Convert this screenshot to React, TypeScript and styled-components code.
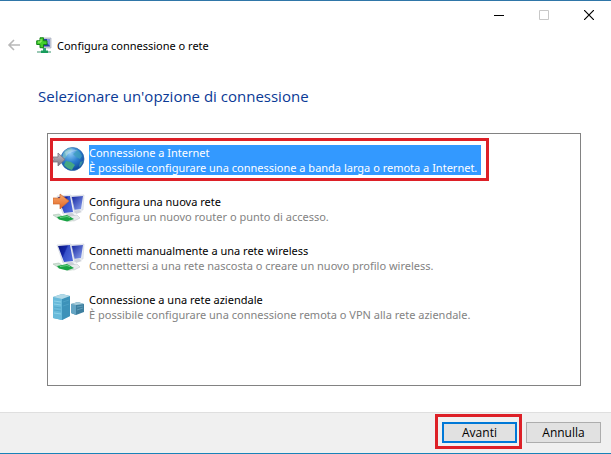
import React, { useState } from "react";
import styled, { createGlobalStyle, css } from "styled-components";

const GlobalStyle = createGlobalStyle`
  *, *::before, *::after { box-sizing: border-box; }
  body {
    margin: 0;
    background: #fff;
    color: #000;
    font: 11px/15px "Noto Sans", "Open Sans", sans-serif;
  }
  button { font: inherit; color: inherit; }
`;

const Window = styled.div`
  display: flex;
  flex-direction: column;
  min-height: 100vh;
  background: #fff;
  border-top: 1px solid #2f76a8;
  border-bottom: 1px solid #1883b8;
`;

const CaptionBar = styled.div`
  display: flex;
  justify-content: flex-end;
  height: 28px;
`;

const CaptionButton = styled.button`
  display: flex;
  align-items: center;
  justify-content: center;
  width: 45px;
  padding: 0;
  border: 0;
  background: none;
`;

const TitleRow = styled.header`
  display: flex;
  align-items: center;
  height: 32px;
  padding-left: 7px;
`;

const BackButton = styled.button`
  display: flex;
  padding: 0;
  margin-right: 15px;
  border: 0;
  background: none;
`;

const WindowTitle = styled.span`
  margin-left: 5px;
`;

const Content = styled.main`
  display: flex;
  flex: 1;
  flex-direction: column;
  padding: 24px 30px 26px 38px;
`;

const Heading = styled.h1`
  margin: 0 0 26px;
  color: #0a3a96;
  font-family: "Open Sans", "Noto Sans", sans-serif;
  font-size: 15px;
  font-weight: 400;
  line-height: 22px;
`;

const OptionList = styled.div`
  display: flex;
  flex: 1;
  flex-direction: column;
  align-items: flex-start;
  gap: 17px;
  margin-left: 9px;
  padding: 10px 5px;
  border: 1px solid #828282;
`;

const markFrame = css`
  content: "";
  position: absolute;
  border: 3px solid #dd2027;
  pointer-events: none;
`;

const Option = styled.button<{ $marked: boolean }>`
  position: relative;
  display: flex;
  align-items: center;
  gap: 4px;
  padding: 0;
  border: 0;
  background: none;
  text-align: left;
  white-space: nowrap;
  ${({ $marked }) => $marked && css`
    &::after { ${markFrame} inset: -6px -8px -5px -3px; }
  `}
`;

const OptionText = styled.span<{ $selected: boolean }>`
  display: flex;
  flex-direction: column;
  padding-right: 4px;
  color: ${({ $selected }) => ($selected ? "#fff" : "#000")};
  background: ${({ $selected }) => ($selected ? "#3399ff" : "transparent")};
`;

const OptionDetail = styled.span<{ $selected: boolean }>`
  color: ${({ $selected }) => ($selected ? "#fff" : "#838383")};
`;

const Footer = styled.footer`
  display: flex;
  justify-content: flex-end;
  gap: 9px;
  padding: 9px 10px 10px;
  border-top: 1px solid #dfdfdf;
  background: #f0f0f0;
`;

const ActionButton = styled.button<{ $primary?: boolean }>`
  position: relative;
  display: flex;
  align-items: center;
  justify-content: center;
  width: 75px;
  height: 21px;
  padding: 0;
  border: ${({ $primary }) => ($primary ? "2px solid #0078d7" : "1px solid #adadad")};
  background: #e1e1e1;
  font-family: "Open Sans", "Noto Sans", sans-serif;
  font-size: 12px;
  ${({ $primary }) => $primary && css`
    &::after { ${markFrame} inset: -10px -7px -8px -9px; }
  `}
`;

const BackIcon = () => (
  <svg width="14" height="14" viewBox="0 0 14 14" fill="none" stroke="#b8b8b8" strokeWidth="1.6" aria-hidden="true">
    <path d="M13 7H2M7 2L2 7l5 5" />
  </svg>
);

const SetupIcon = () => (
  <svg width="16" height="17" viewBox="0 0 16 17" aria-hidden="true">
    <path d="M6 1h9v10H6z" fill="#cfd4de" stroke="#a6adbd" strokeWidth=".7" />
    <path d="M7 2h7v7.5H7z" fill="#2b3fa8" />
    <path d="M11 2h3v7l-3-3z" fill="#8296dc" />
    <path d="M7 11h3v3H7z" fill="#35a578" />
    <path d="M1 14h14v2H1z" fill="#9bc9b5" />
    <path d="M5 13.5h7V16H5z" fill="#169c5b" />
    <path d="M4 .8h3.5v3H11v3.7H7.5v3.2H4V7.500H.7V3.800H4z" fill="#43d02c" stroke="#16821b" />
    <path d="M5 2v3H2" fill="none" stroke="#a5f277" />
  </svg>
);

const GlobeIcon = () => (
  <svg width="32" height="32" viewBox="0 0 32 32" aria-hidden="true">
    <defs>
      <radialGradient id="ocean" cx=".4" cy=".25" r=".8">
        <stop offset="0" stopColor="#8fcbf5" />
        <stop offset=".5" stopColor="#2c7fd0" />
        <stop offset="1" stopColor="#0b3f91" />
      </radialGradient>
      <linearGradient id="steel" x2="0" y2="1">
        <stop stopColor="#c5c2ca" />
        <stop offset="1" stopColor="#77737f" />
      </linearGradient>
    </defs>
    <circle cx="19.500" cy="15" r="11.500" fill="url(#ocean)" stroke="#2869ad" strokeWidth=".7" />
    <path d="M11 8q3-4 8-4l-1 3-3 1-1 4-3 3-2-1z" fill="#7abfc0" opacity=".7" />
    <path d="M13 17l5 1 4 3-2 3-1 2q-5-1-8-5z" fill="#46a783" />
    <path d="M22 5q5 2 7 7l-2 3-4-2-3-3 3-2z" fill="#3f9fbd" opacity=".8" />
    <path d="M27 18l3-1q-1 4-4 6z" fill="#388fa2" />
    <path d="M12 8q6-5 13-1-7 0-12 5z" fill="#fff" opacity=".3" />
    <path d="M0 13h5V9l7 6.500-7 6.500v-4H0l1-3z" fill="url(#steel)" stroke="#77717f" strokeWidth=".8" />
  </svg>
);

const NetworkIcon = ({ incoming = false }: { incoming?: boolean }) => {
  const id = incoming ? "screen-in" : "screen";
  return (
    <svg width="32" height="32" viewBox="0 0 32 32" aria-hidden="true">
      <defs>
        <linearGradient id={id} x2="1" y2=".5">
          <stop stopColor="#0a1680" />
          <stop offset=".5" stopColor="#1426a6" />
          <stop offset=".58" stopColor="#3650c8" />
          <stop offset="1" stopColor="#4a64d8" />
        </linearGradient>
        <linearGradient id={`${id}-back`} x2="1" y2="1">
          <stop stopColor="#0e1f9d" />
          <stop offset="1" stopColor="#8fa5f0" />
        </linearGradient>
        <linearGradient id={`${id}-arrow`} x2="0" y2="1">
          <stop stopColor="#f8aa70" />
          <stop offset="1" stopColor="#e2641f" />
        </linearGradient>
      </defs>
      <path d="M17 3l14-1-1 15-11 1z" fill="#e9ecf3" stroke="#ccd1dc" strokeWidth=".6" />
      <path d="M18 4l12-1-2 13-8 1z" fill={`url(#${id}-back)`} />
      <path d="M21 18l5-1 3 2-6 2z" fill="#cdd2da" />
      <path d="M4 3l14-1 4 18-12 1z" fill="#eceff5" stroke="#ccd1dc" strokeWidth=".6" />
      <path d="M5 4l12-1 3 16-9 1z" fill={`url(#${id})`} />
      <path d="M13 21l6-1 4 3-7 1z" fill="#c9ced6" />
      <path d="M17 23l7-1 3 3-6 3-5-2z" fill="#e8eaed" stroke="#c3c7cc" strokeWidth=".6" />
      <path d="M0 22l6-1 4 3-4 2z" fill="#cfe3d5" stroke="#aac3b1" strokeWidth=".6" />
      <path d="M12 27l8-1 1 2-6 1z" fill="#d1ddd5" />
      <path d="M4 24l10-2 7 4-7 2.500-8-2z" fill="#18a343" />
      <path d="M7 24.500l7-1 3 1" stroke="#6fd088" fill="none" />
      {incoming && (
        <path d="M0 5h7V1l9 7-9 8v-5H0z" fill={`url(#${id}-arrow)`} stroke="#cf6a30" strokeWidth=".7" />
      )}
    </svg>
  );
};

const ServerIcon = () => (
  <svg width="32" height="32" viewBox="0 0 32 32" aria-hidden="true">
    <path d="M18 13l7-2 6 2v8l-8 3-5-2z" fill="#3e7f9f" />
    <path d="M18 13l5 1v10l-5-2z" fill="#65a5c4" />
    <path d="M18 13l7-2 6 2-8 1z" fill="#a8cddb" />
    <path d="M24 16l6-1M24 19l6-2" stroke="#619db9" />
    <path d="M0 6l9-3 8 2v20l-8 4-9-2z" fill="#4faed2" />
    <path d="M0 6l9 2v21l-9-2z" fill="#68bada" />
    <path d="M9 8l8-3v20l-8 4z" fill="#3c92b9" />
    <path d="M0 6l9-3 8 2-8 3z" fill="#b3d9e6" />
    <path d="M1 10l7 1M1 13l7 1M1 22l7 1" stroke="#8bd2e9" />
    <path d="M1 16l7 1M1 19l7 1" stroke="#52a8cb" />
    <path d="M10 11l6-2M10 15l6-2" stroke="#4ba0c4" />
  </svg>
);

const options = [
  {
    title: "Connessione a Internet",
    detail: "È possibile configurare una connessione a banda larga o remota a Internet.",
    icon: <GlobeIcon />,
  },
  {
    title: "Configura una nuova rete",
    detail: "Configura un nuovo router o punto di accesso.",
    icon: <NetworkIcon incoming />,
  },
  {
    title: "Connetti manualmente a una rete wireless",
    detail: "Connettersi a una rete nascosta o creare un nuovo profilo wireless.",
    icon: <NetworkIcon />,
  },
  {
    title: "Connessione a una rete aziendale",
    detail: "È possibile configurare una connessione remota o VPN alla rete aziendale.",
    icon: <ServerIcon />,
  },
];

export default function App() {
  const [selected, setSelected] = useState(0);

  return (
    <>
      <GlobalStyle />
      <Window>
        <CaptionBar>
          <CaptionButton aria-label="Riduci a icona">
            <svg width="10" height="10"><path d="M0 5.500h10" stroke="#000" /></svg>
          </CaptionButton>
          <CaptionButton aria-label="Ingrandisci" disabled>
            <svg width="10" height="10"><path d="M.5.5h9v9h-9z" fill="none" stroke="#c8c8c8" /></svg>
          </CaptionButton>
          <CaptionButton aria-label="Chiudi">
            <svg width="10" height="10"><path d="M0 0l10 10M10 0L0 10" stroke="#000" strokeWidth="1.200" /></svg>
          </CaptionButton>
        </CaptionBar>
        <TitleRow>
          <BackButton aria-label="Indietro" disabled><BackIcon /></BackButton>
          <SetupIcon />
          <WindowTitle>Configura connessione o rete</WindowTitle>
        </TitleRow>
        <Content>
          <Heading>Selezionare un'opzione di connessione</Heading>
          <OptionList>
            {options.map((option, index) => (
              <Option
                key={option.title}
                $marked={index === 0}
                aria-pressed={selected === index}
                onClick={() => setSelected(index)}
              >
                {option.icon}
                <OptionText $selected={selected === index}>
                  <span>{option.title}</span>
                  <OptionDetail $selected={selected === index}>{option.detail}</OptionDetail>
                </OptionText>
              </Option>
            ))}
          </OptionList>
        </Content>
        <Footer>
          <ActionButton $primary>Avanti</ActionButton>
          <ActionButton>Annulla</ActionButton>
        </Footer>
      </Window>
    </>
  );
}
